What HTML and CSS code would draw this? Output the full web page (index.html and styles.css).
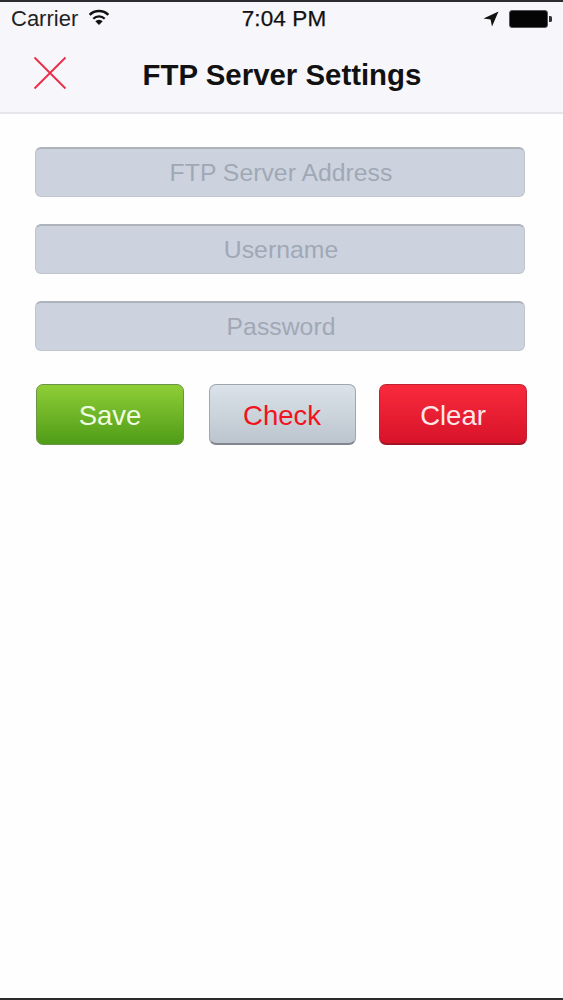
FILE: index.html
```html
<!DOCTYPE html>
<html lang="en">
<head>
<meta charset="utf-8">
<title>FTP Server Settings</title>
<link rel="stylesheet" href="styles.css">
</head>
<body>
<div class="screen">
  <header class="top">
    <div class="status">
      <div class="status-left">
        <span>Carrier</span>
        <svg class="wifi" viewBox="0 0 22 17" width="22" height="17"><path d="M11 16 7.300 12.200a5.200 5.200 0 0 1 7.400 0Z" fill="#111"/><path d="M5.300 9.700a8 8 0 0 1 11.400 0" fill="none" stroke="#111" stroke-width="2.300"/><path d="M1.700 5.800a13.200 13.200 0 0 1 18.600 0" fill="none" stroke="#111" stroke-width="2.600"/></svg>
      </div>
      <div class="clock">7:04 PM</div>
      <div class="status-right">
        <svg class="loc" viewBox="0 0 16 16" width="16" height="16"><path d="M15.500 .5 .5 7.400l7.100 1.100L9 15.500Z" fill="#111"/></svg>
        <svg class="batt" viewBox="0 0 44 18" width="44" height="18"><rect x="0.500" y="0.500" width="38" height="17" rx="2.500" fill="#050505" stroke="#555"/><path d="M40 6h1.400a1.600 1.600 0 0 1 1.600 1.600v2.800a1.600 1.600 0 0 1-1.600 1.600H40Z" fill="#333"/></svg>
      </div>
    </div>
    <div class="nav">
      <svg class="close" viewBox="0 0 34 34" width="34" height="34"><path d="M1.500 1.500 32.500 32.500M32.500 1.500 1.500 32.500" stroke="#ea2c46" stroke-width="1.800" fill="none"/></svg>
      <h1 class="title">FTP Server Settings</h1>
    </div>
  </header>
  <main class="form">
    <div class="field">FTP Server Address</div>
    <div class="field">Username</div>
    <div class="field">Password</div>
    <div class="actions">
      <button class="btn save">Save</button>
      <button class="btn check">Check</button>
      <button class="btn clear">Clear</button>
    </div>
  </main>
</div>
</body>
</html>
```
FILE: styles.css
```css
html, body { margin: 0; padding: 0; background: #fff; }
body { font-family: "Liberation Sans", sans-serif; }
.screen {
  width: 563px; height: 1000px; box-sizing: border-box;
  border-top: 2px solid #2c2c2e; border-bottom: 2px solid #2c2c2e;
  background: #fefefe; overflow: hidden;
}
.top { height: 112px; box-sizing: border-box; background: #f7f6fa; border-bottom: 2px solid #e6e6ea; }
.status { height: 34px; display: grid; grid-template-columns: 1fr auto 1fr; align-items: center; padding: 0 10px 0 11px; color: #111; }
.status-left { display: flex; align-items: center; gap: 10px; font-size: 22px; color: #222; }
.wifi { margin-top: -3px; }
.clock { font-size: 22.500px; letter-spacing: .1px; -webkit-text-stroke: .25px #111; margin-left: 4px; }
.status-right { display: flex; justify-content: flex-end; align-items: center; gap: 10px; }
.nav { height: 76px; display: flex; align-items: center; justify-content: center; position: relative; }
.close { position: absolute; left: 33px; top: 20px; }
.title { margin: 2px 0 0 1px; font-size: 29.400px; font-weight: 700; color: #111; }
.form { padding: 33px 38px 0 35px; display: flex; flex-direction: column; gap: 27px; }
.field {
  height: 50px; box-sizing: border-box; background: #ccd3df; padding-left: 2px;
  border: 1px solid #c0c5ce; border-top: 2px solid #aeb3bb; border-radius: 6px;
  display: flex; align-items: center; justify-content: center;
  color: #a1a8b5; font-size: 24.800px;
}
.actions { display: flex; justify-content: space-between; margin: 6px -2px 0 1px; }
.btn {
  width: 148px; height: 61px; box-sizing: border-box; border-radius: 7px; padding: 3px 0 0;
  font-family: "Liberation Sans", sans-serif; font-size: 27.500px; color: #fff;
}
.save { background: linear-gradient(#8fce36, #4f9c18); border: 1px solid #6c9448; color: #eefbe0; }
.check { width: 147px; margin-left: 1px; background: linear-gradient(#dbe2e9, #bcc5ce); border: 1px solid #a0a6ad; border-bottom: 2px solid #80868e; color: #f0141e; }
.clear { background: linear-gradient(#f92a3c, #d8132a); border: 1px solid #c02234; border-bottom: 2px solid #a01426; color: #fde6e8; }
```
